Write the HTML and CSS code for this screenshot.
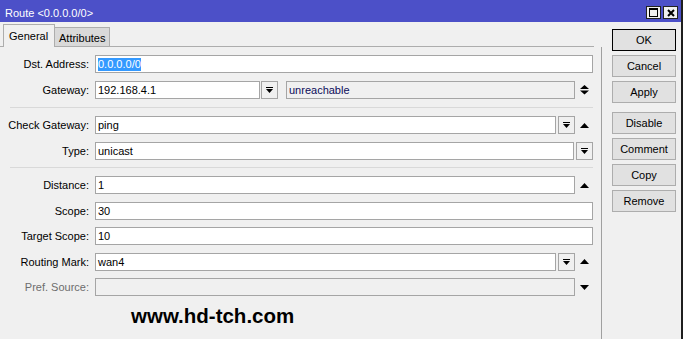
FILE: index.html
```html
<!DOCTYPE html>
<html>

<head>
  <meta charset="utf-8">
  <meta name="viewport" content="width=device-width">
  <title>Route &lt;0.0.0.0/0&gt;</title>
  <link rel="stylesheet" href="styles.css">
</head>

<body>
  <div class="window">
    <div class="titlebar">
      <span class="title">Route &lt;0.0.0.0/0&gt;</span>
      <div class="title-buttons">
        <span class="tbtn">
          <svg width="9" height="9" viewBox="0 0 9 9"><rect x="0.5" y="0.5" width="8" height="8" fill="none" stroke="#000"/><rect x="0" y="0" width="9" height="2"/></svg>
        </span>
        <span class="tbtn">
          <svg width="8" height="8" viewBox="0 0 8 8"><path d="M1 1L7 7M7 1L1 7" stroke="#000" stroke-width="2"/></svg>
        </span>
      </div>
    </div>

    <div class="content">
      <div class="main">
        <div class="tabs">
          <span class="tab active">General</span>
          <span class="tab">Attributes</span>
        </div>

        <div class="panel">
          <div class="row">
            <label class="label">Dst. Address:</label>
            <div class="field"><span class="selected">0.0.0.0/0</span></div>
          </div>
          <div class="row">
            <label class="label">Gateway:</label>
            <div class="field gateway">192.168.4.1</div>
            <span class="drop">
              <svg width="7" height="6" viewBox="0 0 7 6"><rect width="7" height="1"/><path d="M0 2h7l-3.5 4z"/></svg>
            </span>
            <div class="field disabled status">unreachable</div>
            <span class="side">
              <svg width="9" height="10" viewBox="0 0 9 10"><path d="M0 4L4.5 0L9 4z M0 5.5h9L4.5 9.5z"/></svg>
            </span>
          </div>

          <div class="sep"></div>

          <div class="row">
            <label class="label">Check Gateway:</label>
            <div class="field">ping</div>
            <span class="drop">
              <svg width="7" height="6" viewBox="0 0 7 6"><rect width="7" height="1"/><path d="M0 2h7l-3.5 4z"/></svg>
            </span>
            <span class="side">
              <svg width="9" height="5" viewBox="0 0 9 5"><path d="M0 5L4.5 0L9 5z"/></svg>
            </span>
          </div>
          <div class="row">
            <label class="label">Type:</label>
            <div class="field">unicast</div>
            <span class="drop">
              <svg width="7" height="6" viewBox="0 0 7 6"><rect width="7" height="1"/><path d="M0 2h7l-3.5 4z"/></svg>
            </span>
          </div>

          <div class="sep last"></div>

          <div class="group">
            <div class="row">
              <label class="label">Distance:</label>
              <div class="field">1</div>
              <span class="side">
                <svg width="9" height="5" viewBox="0 0 9 5"><path d="M0 5L4.5 0L9 5z"/></svg>
              </span>
            </div>
            <div class="row">
              <label class="label">Scope:</label>
              <div class="field">30</div>
            </div>
            <div class="row">
              <label class="label">Target Scope:</label>
              <div class="field">10</div>
            </div>
            <div class="row">
              <label class="label">Routing Mark:</label>
              <div class="field">wan4</div>
              <span class="drop">
                <svg width="7" height="6" viewBox="0 0 7 6"><rect width="7" height="1"/><path d="M0 2h7l-3.5 4z"/></svg>
              </span>
              <span class="side">
                <svg width="9" height="5" viewBox="0 0 9 5"><path d="M0 5L4.5 0L9 5z"/></svg>
              </span>
            </div>
            <div class="row">
              <label class="label muted">Pref. Source:</label>
              <div class="field disabled"></div>
              <span class="side">
                <svg width="9" height="5" viewBox="0 0 9 5"><path d="M0 0h9L4.5 5z"/></svg>
              </span>
            </div>
          </div>

          <div class="watermark">www.hd-tch.com</div>
        </div>
      </div>

      <div class="actions">
        <button class="btn default">OK</button>
        <button class="btn">Cancel</button>
        <button class="btn">Apply</button>
        <button class="btn spaced">Disable</button>
        <button class="btn">Comment</button>
        <button class="btn">Copy</button>
        <button class="btn">Remove</button>
      </div>
    </div>
  </div>
  <div class="backdrop"></div>
</body>

</html>
```

FILE: styles.css
```css
* {
  box-sizing: border-box;
}

html,
body {
  margin: 0;
  height: 100%;
}

body {
  display: flex;
  overflow: hidden;
  background: #fff;
  color: #000;
  font-family: "Liberation Sans", Arial, sans-serif;
  font-size: 11px;
}

.window {
  width: 683px;
  height: 339px;
  flex-shrink: 0;
  display: flex;
  flex-direction: column;
  background: #f0f0f0;
  border-right: 2px solid #1e1e1e;
}

.backdrop {
  flex: 1;
  background: #fff;
}

.titlebar {
  height: 22px;
  display: flex;
  justify-content: space-between;
  align-items: center;
  padding: 0 3px 0 5px;
  background: #4c50c8;
  color: #fff;
}

.title {
  padding-top: 3px;
}

.title-buttons {
  display: flex;
  gap: 2px;
  padding-top: 3px;
}

.tbtn {
  width: 15px;
  height: 13px;
  display: flex;
  justify-content: center;
  align-items: center;
  background: #f0f0f0;
  border: 1px solid #222;
}

.content {
  flex: 1;
  display: flex;
}

.main {
  width: 602px;
  display: flex;
  flex-direction: column;
}

.tabs {
  height: 25px;
  display: flex;
  align-items: flex-end;
  margin-right: 8px;
  padding-left: 3px;
  border-bottom: 1px solid #adadad;
}

.tab {
  height: 19px;
  width: 55px;
  display: flex;
  align-items: center;
  padding: 1px 0 0 4px;
  background: #d9d9d9;
  border: 1px solid #adadad;
  border-left: none;
  border-bottom: none;
}

.tab.active {
  height: 23px;
  width: 52px;
  margin-bottom: -1px;
  padding: 0 0 0 5px;
  background: #f0f0f0;
  border-left: 1px solid #adadad;
}

.panel {
  flex: 1;
  padding: 8px 8px 0 0;
  border-right: 1px solid #a0a0a0;
}

.row {
  height: 18px;
  display: flex;
  align-items: stretch;
  margin-bottom: 8px;
}

.group .row {
  margin-bottom: 7.5px;
}

.label {
  width: 95px;
  flex-shrink: 0;
  display: flex;
  align-items: center;
  justify-content: flex-end;
  padding-right: 6px;
}

.label.muted {
  color: #6d6d6d;
}

.field {
  flex: 1;
  display: flex;
  align-items: center;
  padding-left: 2px;
  background: #fff;
  border: 1px solid #a5a5a5;
  white-space: nowrap;
}

.field.disabled {
  background: #f0f0f0;
}

.field.gateway {
  flex: 0 0 165px;
}

.field.status {
  margin-left: 8px;
  color: #0c0c5a;
}

.selected {
  background: #3399ff;
  color: #fff;
  line-height: 13px;
}

.drop {
  width: 17px;
  flex-shrink: 0;
  display: flex;
  justify-content: center;
  align-items: center;
  margin-left: 2px;
  background: #f0f0f0;
  border: 1px solid #a5a5a5;
}

.gateway + .drop {
  margin-left: 1px;
}

.side {
  width: 18px;
  flex-shrink: 0;
  display: flex;
  align-items: center;
  padding-left: 5px;
}

.sep {
  height: 1px;
  margin: 1px 0 8px 10px;
  background: #d9d9d9;
}

.sep.last {
  margin-top: -1px;
}

.watermark {
  margin-top: 2px;
  padding-left: 131px;
  line-height: 23px;
  font-size: 20.5px;
  font-weight: bold;
}

.actions {
  display: flex;
  flex-direction: column;
  gap: 4px;
  padding: 7px 0 0 10px;
}

.btn {
  width: 64px;
  height: 22px;
  padding: 0;
  background: #e1e1e1;
  border: 1px solid #adadad;
  color: #000;
  font-family: inherit;
  font-size: 11px;
}

.btn.default {
  border-color: #000;
}

.btn.spaced {
  margin-top: 5px;
}
```
